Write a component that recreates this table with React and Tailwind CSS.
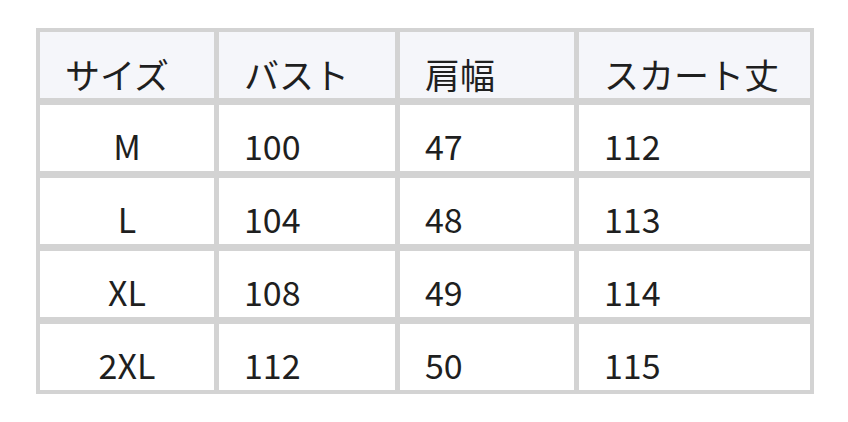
import React from 'react'

const headers = ['サイズ', 'バスト', '肩幅', 'スカート丈']

const rows = [
    ['M', '100', '47', '112'],
    ['L', '104', '48', '113'],
    ['XL', '108', '49', '114'],
    ['2XL', '112', '50', '115'],
]

const App = () => {
    return (
        <div className="w-[848px] h-[422px] bg-white pt-[28px] pl-[36px]" style={{ fontFamily: '"Noto Sans CJK JP", "Noto Sans", sans-serif' }}>
            <div className="w-[778px] bg-[#d3d3d3] p-[4px] grid grid-cols-[174px_176px_174px_231px] auto-rows-[66px] gap-x-[5px] gap-y-[7px] text-[34px] text-[#1f1f1f] leading-none">
                {headers.map((h) => (
                    <div key={h} className="bg-[#f5f6fa] flex items-end pl-[25px] pb-[7px] text-[35px]">
                        {h}
                    </div>
                ))}
                {rows.map((r) =>
                    r.map((c, i) => (
                        <div key={r[0] + i} className={`bg-white flex items-end pb-[8px] ${i === 0 ? 'justify-center' : 'pl-[25px]'}`}>
                            {c}
                        </div>
                    ))
                )}
            </div>
        </div>
    )
}

export default App
